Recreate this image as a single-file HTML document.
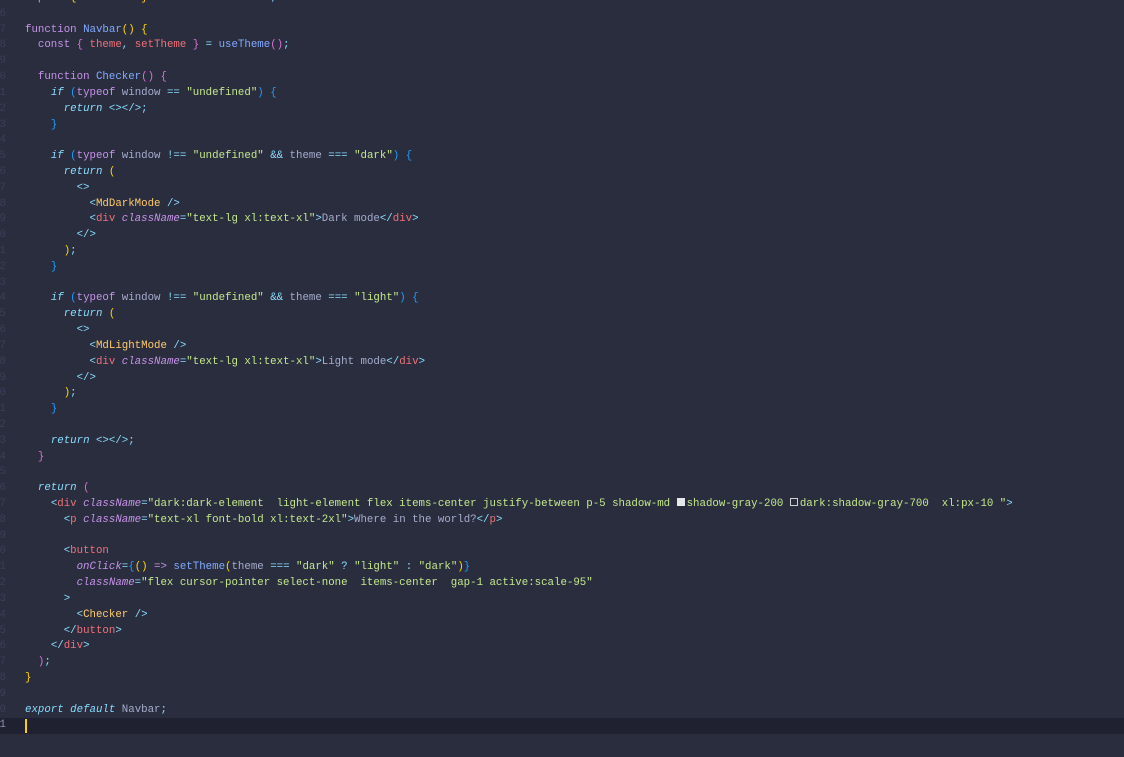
<!DOCTYPE html>
<html><head><meta charset="utf-8"><style>
html,body{margin:0;padding:0;background:#292d3e;width:1124px;height:757px;overflow:hidden}
.ed{position:absolute;left:0;top:-9px;width:1124px;font-family:"Liberation Mono",monospace;font-size:10.75px;color:#a6accd}
.l{height:15.82px;line-height:15.82px;white-space:pre;position:relative;padding-left:25px}
.n{position:absolute;left:-4px;width:10px;color:#3a3f58;text-align:right}
.cur{background:#1f2130}
.cur::before{content:"";position:absolute;left:25px;top:1px;width:1.5px;height:14px;background:#ffcc00}
.k{color:#c792ea}.f{color:#82aaff}.s{color:#c3e88d}.v{color:#f07178}.p{color:#89ddff}
.y{color:#ffd700}.m{color:#da70d6}.b{color:#179fff}.c{color:#ffcb6b}.a{color:#c792ea;font-style:italic}.i{color:#89ddff;font-style:italic}
.sw{display:inline-block;width:8px;height:8px;margin:0 2px 0 0;vertical-align:-0px;box-sizing:border-box}
</style></head><body><div class="ed">
<div class="l"><span class="n">5</span><span class="k">import</span> <span class="y">{</span> <span class="v">useTheme</span> <span class="y">}</span> <span class="k">from</span> <span class="s">"next-themes"</span><span class="p">;</span></div>
<div class="l"><span class="n">6</span></div>
<div class="l"><span class="n">7</span><span class="k">function</span> <span class="f">Navbar</span><span class="y">()</span> <span class="y">{</span></div>
<div class="l"><span class="n">8</span>  <span class="k">const</span> <span class="m">{</span> <span class="v">theme</span><span class="p">,</span> <span class="v">setTheme</span> <span class="m">}</span> <span class="p">=</span> <span class="f">useTheme</span><span class="m">()</span><span class="p">;</span></div>
<div class="l"><span class="n">9</span></div>
<div class="l"><span class="n">0</span>  <span class="k">function</span> <span class="f">Checker</span><span class="m">()</span> <span class="m">{</span></div>
<div class="l"><span class="n">1</span>    <span class="i">if</span> <span class="b">(</span><span class="k">typeof</span> window <span class="p">==</span> <span class="s">"undefined"</span><span class="b">)</span> <span class="b">{</span></div>
<div class="l"><span class="n">2</span>      <span class="i">return</span> <span class="p">&lt;&gt;&lt;/&gt;;</span></div>
<div class="l"><span class="n">3</span>    <span class="b">}</span></div>
<div class="l"><span class="n">4</span></div>
<div class="l"><span class="n">5</span>    <span class="i">if</span> <span class="b">(</span><span class="k">typeof</span> window <span class="p">!==</span> <span class="s">"undefined"</span> <span class="p">&amp;&amp;</span> theme <span class="p">===</span> <span class="s">"dark"</span><span class="b">)</span> <span class="b">{</span></div>
<div class="l"><span class="n">6</span>      <span class="i">return</span> <span class="y">(</span></div>
<div class="l"><span class="n">7</span>        <span class="p">&lt;&gt;</span></div>
<div class="l"><span class="n">8</span>          <span class="p">&lt;</span><span class="c">MdDarkMode</span> <span class="p">/&gt;</span></div>
<div class="l"><span class="n">9</span>          <span class="p">&lt;</span><span class="v">div</span> <span class="a">className</span><span class="p">=</span><span class="s">"text-lg xl:text-xl"</span><span class="p">&gt;</span>Dark mode<span class="p">&lt;/</span><span class="v">div</span><span class="p">&gt;</span></div>
<div class="l"><span class="n">0</span>        <span class="p">&lt;/&gt;</span></div>
<div class="l"><span class="n">1</span>      <span class="y">)</span><span class="p">;</span></div>
<div class="l"><span class="n">2</span>    <span class="b">}</span></div>
<div class="l"><span class="n">3</span></div>
<div class="l"><span class="n">4</span>    <span class="i">if</span> <span class="b">(</span><span class="k">typeof</span> window <span class="p">!==</span> <span class="s">"undefined"</span> <span class="p">&amp;&amp;</span> theme <span class="p">===</span> <span class="s">"light"</span><span class="b">)</span> <span class="b">{</span></div>
<div class="l"><span class="n">5</span>      <span class="i">return</span> <span class="y">(</span></div>
<div class="l"><span class="n">6</span>        <span class="p">&lt;&gt;</span></div>
<div class="l"><span class="n">7</span>          <span class="p">&lt;</span><span class="c">MdLightMode</span> <span class="p">/&gt;</span></div>
<div class="l"><span class="n">8</span>          <span class="p">&lt;</span><span class="v">div</span> <span class="a">className</span><span class="p">=</span><span class="s">"text-lg xl:text-xl"</span><span class="p">&gt;</span>Light mode<span class="p">&lt;/</span><span class="v">div</span><span class="p">&gt;</span></div>
<div class="l"><span class="n">9</span>        <span class="p">&lt;/&gt;</span></div>
<div class="l"><span class="n">0</span>      <span class="y">)</span><span class="p">;</span></div>
<div class="l"><span class="n">1</span>    <span class="b">}</span></div>
<div class="l"><span class="n">2</span></div>
<div class="l"><span class="n">3</span>    <span class="i">return</span> <span class="p">&lt;&gt;&lt;/&gt;;</span></div>
<div class="l"><span class="n">4</span>  <span class="m">}</span></div>
<div class="l"><span class="n">5</span></div>
<div class="l"><span class="n">6</span>  <span class="i">return</span> <span class="m">(</span></div>
<div class="l"><span class="n">7</span>    <span class="p">&lt;</span><span class="v">div</span> <span class="a">className</span><span class="p">=</span><span class="s">"dark:dark-element  light-element flex items-center justify-between p-5 shadow-md <span class="sw" style="background:#e5e7eb"></span>shadow-gray-200 <span class="sw" style="border:1px solid #d0d0d0"></span>dark:shadow-gray-700  xl:px-10 "</span><span class="p">&gt;</span></div>
<div class="l"><span class="n">8</span>      <span class="p">&lt;</span><span class="v">p</span> <span class="a">className</span><span class="p">=</span><span class="s">"text-xl font-bold xl:text-2xl"</span><span class="p">&gt;</span>Where in the world?<span class="p">&lt;/</span><span class="v">p</span><span class="p">&gt;</span></div>
<div class="l"><span class="n">9</span></div>
<div class="l"><span class="n">0</span>      <span class="p">&lt;</span><span class="v">button</span></div>
<div class="l"><span class="n">1</span>        <span class="a">onClick</span><span class="p">=</span><span class="b">{</span><span class="y">()</span> <span class="k">=&gt;</span> <span class="f">setTheme</span><span class="y">(</span>theme <span class="p">===</span> <span class="s">"dark"</span> <span class="p">?</span> <span class="s">"light"</span> <span class="p">:</span> <span class="s">"dark"</span><span class="y">)</span><span class="b">}</span></div>
<div class="l"><span class="n">2</span>        <span class="a">className</span><span class="p">=</span><span class="s">"flex cursor-pointer select-none  items-center  gap-1 active:scale-95"</span></div>
<div class="l"><span class="n">3</span>      <span class="p">&gt;</span></div>
<div class="l"><span class="n">4</span>        <span class="p">&lt;</span><span class="c">Checker</span> <span class="p">/&gt;</span></div>
<div class="l"><span class="n">5</span>      <span class="p">&lt;/</span><span class="v">button</span><span class="p">&gt;</span></div>
<div class="l"><span class="n">6</span>    <span class="p">&lt;/</span><span class="v">div</span><span class="p">&gt;</span></div>
<div class="l"><span class="n">7</span>  <span class="m">)</span><span class="p">;</span></div>
<div class="l"><span class="n">8</span><span class="y">}</span></div>
<div class="l"><span class="n">9</span></div>
<div class="l"><span class="n">0</span><span class="i">export</span> <span class="i">default</span> Navbar<span class="p">;</span></div>
<div class="l cur"><span class="n" style="color:#8a90b0">1</span></div>
</div></body></html>
